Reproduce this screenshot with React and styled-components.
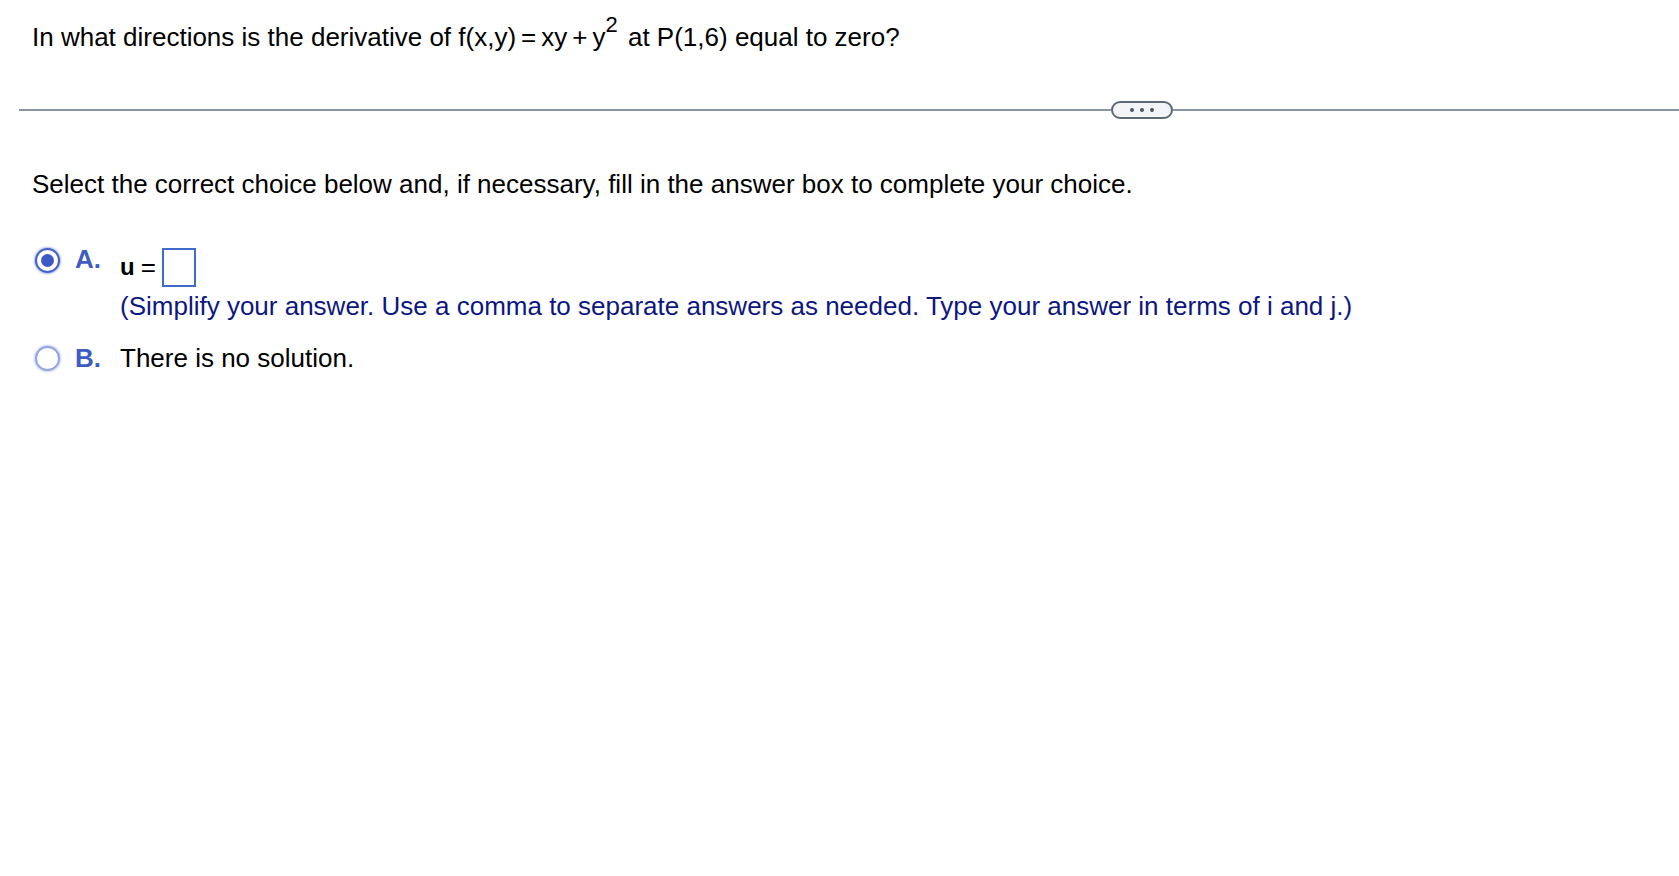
import React from 'react';
import styled, { createGlobalStyle } from 'styled-components';

const GlobalStyle = createGlobalStyle`
  html, body {
    margin: 0;
    padding: 0;
    background: #fff;
  }
  body {
    font-family: "Liberation Sans", Arial, sans-serif;
    color: #000;
  }
`;

const Page = styled.div`
  width: 1679px;
  min-height: 876px;
  overflow: hidden;
`;

const Question = styled.div`
  padding: 20px 0 0 32px;
  font-size: 26px;
  line-height: 34px;
  white-space: nowrap;
`;

const Op = styled.span`
  margin: 0 5px;
`;

const Sup = styled.sup`
  font-size: 22px;
  position: relative;
  top: -4px;
  margin-right: 3px;
  line-height: 0;
`;

const Divider = styled.div`
  display: flex;
  align-items: center;
  margin: 47px 0 0 19px;
`;

const Line = styled.div`
  height: 2px;
  background: #8a95a3;
  width: ${p => (p.$grow ? 'auto' : `${p.$w}px`)};
  flex: ${p => (p.$grow ? '1' : 'none')};
`;

const Pill = styled.div`
  width: 62px;
  height: 18px;
  box-sizing: border-box;
  border: 2px solid #5d6878;
  border-radius: 9px;
  background: #f2f4f7;
  display: flex;
  align-items: center;
  justify-content: center;
  gap: 6px;
`;

const Dot = styled.span`
  width: 4px;
  height: 4px;
  border-radius: 50%;
  background: #4b5563;
`;

const Instructions = styled.div`
  padding: 48px 0 0 32px;
  font-size: 26px;
  line-height: 34px;
  white-space: nowrap;
`;

const Choices = styled.div`
  display: flex;
  flex-direction: column;
  gap: 18px;
  padding: 46px 0 0 35px;
`;

const Choice = styled.div`
  display: grid;
  grid-template-columns: 25px 30px auto;
  column-gap: 15px;
  align-items: start;
`;

const Radio = styled.span`
  width: 25px;
  height: 25px;
  box-sizing: border-box;
  border-radius: 50%;
  border: 2px solid ${p => (p.$checked ? '#4561c9' : '#93a6e3')};
  box-shadow: 0 0 2px 1px ${p => (p.$checked ? 'rgba(69,97,201,0.45)' : 'rgba(147,166,227,0.55)')};
  display: flex;
  align-items: center;
  justify-content: center;
  margin-top: ${p => p.$top}px;
  background: #fff;

  &::after {
    content: '';
    width: 13px;
    height: 13px;
    border-radius: 50%;
    background: #3e59c6;
    display: ${p => (p.$checked ? 'block' : 'none')};
  }
`;

const Letter = styled.span`
  font-size: 26px;
  line-height: 34px;
  font-weight: bold;
  color: #3f5cc3;
  margin-top: ${p => p.$top}px;
`;

const Body = styled.div`
  font-size: 26px;
  line-height: 34px;
  white-space: nowrap;
`;

const AnswerRow = styled.div`
  display: flex;
  align-items: center;
  gap: 6px;
  height: 40px;
`;

const Var = styled.span`
  font-weight: bold;
  font-size: 24px;
`;

const AnswerBox = styled.span`
  display: inline-block;
  width: 34px;
  height: 39px;
  box-sizing: border-box;
  border: 2px solid #3f6bcb;
  background: #fff;
`;

const Hint = styled.div`
  color: #0d1780;
  margin-top: 2px;
`;

export default function App() {
  return (
    <Page>
      <GlobalStyle />
      <Question>
        In what directions is the derivative of f(x,y)<Op>=</Op>xy<Op>+</Op>y<Sup>2</Sup> at P(1,6)
        equal to zero?
      </Question>
      <Divider>
        <Line $w={1092} />
        <Pill>
          <Dot />
          <Dot />
          <Dot />
        </Pill>
        <Line $grow />
      </Divider>
      <Instructions>
        Select the correct choice below and, if necessary, fill in the answer box to complete your choice.
      </Instructions>
      <Choices>
        <Choice>
          <Radio $checked $top={1} />
          <Letter $top={-5}>A.</Letter>
          <Body>
            <AnswerRow>
              <Var>u</Var>
              <span>=</span>
              <AnswerBox />
            </AnswerRow>
            <Hint>
              (Simplify your answer. Use a comma to separate answers as needed. Type your answer in terms of i and j.)
            </Hint>
          </Body>
        </Choice>
        <Choice>
          <Radio $top={5} />
          <Letter $top={0}>B.</Letter>
          <Body>There is no solution.</Body>
        </Choice>
      </Choices>
    </Page>
  );
}
